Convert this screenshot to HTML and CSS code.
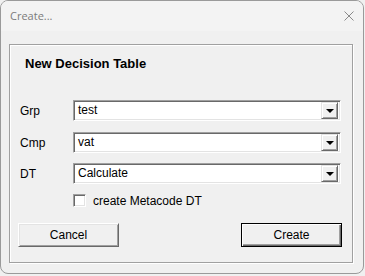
FILE: index.html
```html
<!DOCTYPE html>
<html>
<head>
<meta charset="utf-8">
<link rel="stylesheet" href="styles.css">
</head>
<body>
<div class="window">
  <div class="titlebar">
    <span class="title">Create...</span>
    <svg class="close" width="10" height="10" viewBox="0 0 10 10"><path d="M0.5 0.5 L9.5 9.5 M9.5 0.5 L0.5 9.5" stroke="#8a8a8a" stroke-width="1" fill="none"/></svg>
  </div>
  <div class="client">
    <div class="group">
      <div class="heading">New Decision Table</div>
      <div class="rows">
        <div class="row">
          <span class="label">Grp</span>
          <div class="combo"><span class="value">test</span><span class="drop"><span class="arrow"></span></span></div>
        </div>
        <div class="row row-first">
          <span class="label">Cmp</span>
          <div class="combo"><span class="value">vat</span><span class="drop"><span class="arrow"></span></span></div>
        </div>
        <div class="row">
          <span class="label">DT</span>
          <div class="combo"><span class="value">Calculate</span><span class="drop"><span class="arrow"></span></span></div>
        </div>
      </div>
      <div class="check-row">
        <span class="checkbox"></span>
        <span class="check-label">create Metacode DT</span>
      </div>
      <div class="buttons">
        <div class="btn"><span>Cancel</span></div>
        <div class="btn btn-default"><span>Create</span></div>
      </div>
    </div>
  </div>
</div>
</body>
</html>
```

FILE: styles.css
```css
html, body {
  margin: 0;
  padding: 0;
}
body {
  width: 365px;
  height: 276px;
  background: #f0f0f0;
  font-family: "Liberation Sans", Arial, sans-serif;
  font-size: 12px;
  color: #000;
  overflow: hidden;
}
.window {
  width: 364px;
  height: 274px;
  box-sizing: border-box;
  border: 1px solid #9a9a9a;
  border-radius: 8px;
  background: #f0f0f0;
  display: flex;
  flex-direction: column;
  overflow: hidden;
}
.titlebar {
  height: 30px;
  flex: none;
  display: flex;
  align-items: center;
  justify-content: space-between;
  padding: 0 9px 0 9px;
  background: #f3f3f3;
}
.title {
  font-family: "Open Sans", "Noto Sans", sans-serif;
  font-size: 11px;
  color: #7b7b7b;
  margin-top: -1px;
}
.close {
  display: block;
  margin-top: -1px;
}
.client {
  flex: 1;
  padding: 13px 0 0 8px;
}
.group {
  width: 344px;
  height: 219px;
  box-sizing: border-box;
  border: 1px solid #a0a0a0;
  box-shadow: inset 1px 1px 0 #fff, 1px 1px 0 #fff;
  padding: 11px 10px 0 10px;
  display: flex;
  flex-direction: column;
}
.heading {
  font-weight: bold;
  font-size: 13px;
  line-height: 16px;
  padding-left: 5px;
}
.rows {
  margin-top: 28px;
  display: flex;
  flex-direction: column;
  gap: 10px;
}
.row-first {
  margin-top: 1px;
}
.row {
  display: flex;
  align-items: center;
  height: 21px;
}
.label {
  width: 53px;
  flex: none;
}
.combo {
  width: 268px;
  height: 21px;
  box-sizing: border-box;
  border-top: 1px solid #a0a0a0;
  border-left: 1px solid #a0a0a0;
  border-bottom: 1px solid #fff;
  border-right: 1px solid #fff;
  box-shadow: inset 1px 1px 0 #696969, inset -1px -1px 0 #e3e3e3;
  background: #fff;
  display: flex;
  align-items: center;
  justify-content: space-between;
  padding: 2px;
}
.value {
  padding-left: 2px;
  line-height: 15px;
}
.drop {
  width: 17px;
  height: 17px;
  box-sizing: border-box;
  background: #f0f0f0;
  border-top: 1px solid #e3e3e3;
  border-left: 1px solid #e3e3e3;
  border-bottom: 1px solid #696969;
  border-right: 1px solid #696969;
  box-shadow: inset 1px 1px 0 #fff, inset -1px -1px 0 #a0a0a0;
  display: flex;
  align-items: center;
  justify-content: center;
}
.arrow {
  width: 0;
  height: 0;
  border-left: 4px solid transparent;
  border-right: 4px solid transparent;
  border-top: 4px solid #000;
  margin-top: 1px;
}
.check-row {
  margin-top: 10px;
  display: flex;
  align-items: center;
  padding-left: 53px;
  height: 13px;
}
.checkbox {
  width: 13px;
  height: 13px;
  box-sizing: border-box;
  border-top: 1px solid #a0a0a0;
  border-left: 1px solid #a0a0a0;
  border-bottom: 1px solid #fff;
  border-right: 1px solid #fff;
  box-shadow: inset 1px 1px 0 #696969, inset -1px -1px 0 #e3e3e3;
  background: #fff;
  flex: none;
}
.check-label {
  margin-left: 7px;
}
.buttons {
  margin-top: 16px;
  display: flex;
  justify-content: space-between;
  margin-left: -2px;
}
.btn {
  width: 101px;
  height: 24px;
  box-sizing: border-box;
  border-top: 1px solid #fff;
  border-left: 1px solid #fff;
  border-bottom: 1px solid #696969;
  border-right: 1px solid #696969;
  box-shadow: inset 1px 1px 0 #e3e3e3, inset -1px -1px 0 #a0a0a0;
  background: #f0f0f0;
  display: flex;
  align-items: center;
  justify-content: center;
}
.btn-default {
  border: 1px solid #000;
  box-shadow: inset 1px 1px 0 #fff, inset -1px -1px 0 #696969, inset -2px -2px 0 #a0a0a0;
}
```
